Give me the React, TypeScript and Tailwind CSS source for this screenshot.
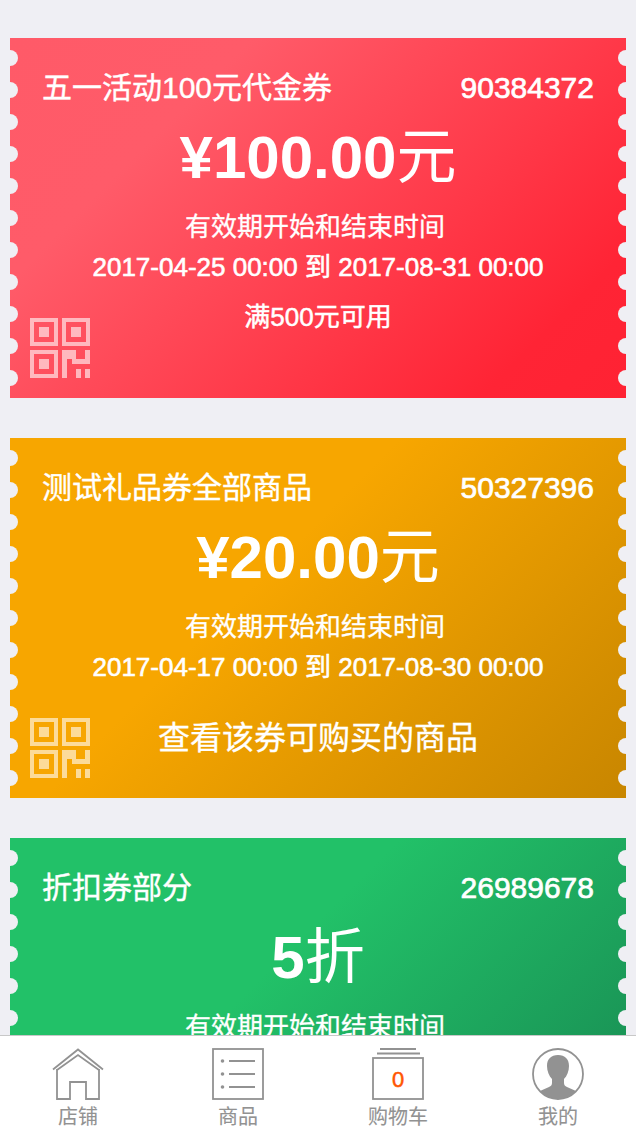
const font = { fontFamily: '"Liberation Sans", "Noto Sans CJK SC", sans-serif' };

function Qr() {
  return (
    <svg width="60" height="60" viewBox="0 0 60 60" className="absolute left-[20px] bottom-[20px]" fill="#fff" fillOpacity="0.6">
      <path fillRule="evenodd" d="M0 0h28v28H0zM4 4v20h20V4zM9 9h10v10H9z" />
      <path fillRule="evenodd" d="M32 0h28v28H32zM36 4v20h20V4zM41 9h10v10H41z" />
      <path fillRule="evenodd" d="M0 32h28v28H0zM4 36v20h20V36zM9 41h10v10H9z" />
      <path d="M32 32h14v9h9v-9h5v14H42v-5h-5v19h-5z" />
      <path d="M46 51h5v9h-5zM55 51h5v9h-5z" />
    </svg>
  );
}

function Scallops({ side }: { side: 'left' | 'right' }) {
  return (
    <div className={side === 'left' ? 'absolute top-[12px] left-[-8px] flex flex-col gap-[16px]' : 'absolute top-[12px] right-[-8px] flex flex-col gap-[16px]'}>
      {Array.from({ length: 11 }).map((_, i) => (
        <div key={i} className="w-[16px] h-[16px] rounded-full bg-[#efeff4]" />
      ))}
    </div>
  );
}

function Card({ gradient, title, code, amount, unit, start, footer, footerBig }: {
  gradient: string; title: string; code: string; amount: string; unit: string; start: string; footer: string; footerBig?: boolean;
}) {
  return (
    <div className={`relative mx-[10px] h-[360px] shrink-0 overflow-hidden text-white ${gradient}`}>
      <Scallops side="left" />
      <Scallops side="right" />
      <div className="flex justify-between items-center pt-[32px] px-[32px] h-[68px] text-[30px] leading-[36px]">
        <span className="[-webkit-text-stroke:0.4px_#fff]">{title}</span>
        <span className="[-webkit-text-stroke:0.7px_#fff]">{code}</span>
      </div>
      <div className="flex justify-center items-baseline h-[72px] mt-[16px] leading-[72px]">
        <span className="font-bold text-[60px]">{amount}</span>
        <span className="text-[60px]">{unit}</span>
      </div>
      <div className="text-center text-[26px] leading-[40px] mt-[13px] pr-[6px] [-webkit-text-stroke:0.3px_#fff]">有效期开始和结束时间</div>
      <div className="text-center text-[26px] leading-[40px] [-webkit-text-stroke:0.6px_#fff]">{start}</div>
      <div className={footerBig ? 'text-center text-[32px] leading-[40px] mt-[31px] [-webkit-text-stroke:0.3px_#fff]' : 'text-center text-[26px] leading-[40px] mt-[10px] [-webkit-text-stroke:0.5px_#fff]'}>{footer}</div>
      <Qr />
    </div>
  );
}

function Tab({ label, children }: { label: string; children: React.ReactNode }) {
  return (
    <div className="w-[160px] flex flex-col items-center">
      <div className="w-[52px] h-[52px] mt-[12px] relative">{children}</div>
      <div className="text-[20px] leading-[24px] mt-[5px] text-[#929292] [-webkit-text-stroke:0.1px_#929292]">{label}</div>
    </div>
  );
}

export default function App() {
  return (
    <div style={font} className="w-[636px] h-[1134px] bg-[#efeff4] flex flex-col overflow-hidden">
      <div className="flex-1 min-h-0 overflow-hidden pt-[38px] flex flex-col gap-[40px]">
        <Card gradient="bg-[linear-gradient(135deg,#ff5a68_0%,#ff5b69_25%,#ff2435_85%,#ff2233_100%)]" title="五一活动100元代金券" code="90384372" amount="¥100.00" unit="元" start="2017-04-25 00:00 到 2017-08-31 00:00" footer="满500元可用" />
        <Card gradient="bg-[linear-gradient(135deg,#f7a600_0%,#f7a600_40%,#c88600_100%)]" title="测试礼品券全部商品" code="50327396" amount="¥20.00" unit="元" start="2017-04-17 00:00 到 2017-08-30 00:00" footer="查看该券可购买的商品" footerBig />
        <Card gradient="bg-[linear-gradient(135deg,#22c168_0%,#22c168_40%,#178550_100%)]" title="折扣券部分" code="26989678" amount="5" unit="折" start="2017-04-17 00:00 到 2017-08-30 00:00" footer="" />
      </div>
      <div className="h-[99px] shrink-0 bg-white border-t border-[#c8c8c8] flex justify-center">
        <div className="w-[640px] shrink-0 flex">
        <Tab label="店铺">
          <svg width="52" height="52" viewBox="0 0 52 52" fill="none" stroke="#929292" strokeWidth="1.8">
            <path d="M1 21.500L26 1.500l25 20" />
            <path d="M5 22L26 7l21 15" />
            <path d="M5 21v30h13V34h16v17h13V21" />
          </svg>
        </Tab>
        <Tab label="商品">
          <svg width="52" height="52" viewBox="0 0 52 52" fill="none" stroke="#929292" strokeWidth="1.8">
            <rect x="1" y="1" width="50" height="50" />
            <path d="M17 13h26M17 26h26M17 39h26" />
            <circle cx="10.500" cy="13" r="1.800" fill="#929292" stroke="none" />
            <circle cx="10.500" cy="26" r="1.800" fill="#929292" stroke="none" />
            <circle cx="10.500" cy="39" r="1.800" fill="#929292" stroke="none" />
          </svg>
        </Tab>
        <Tab label="购物车">
          <svg width="52" height="52" viewBox="0 0 52 52" fill="none" stroke="#929292" strokeWidth="1.8">
            <path d="M8 1h36M5 5.500h43" />
            <rect x="1" y="10" width="50" height="41" />
          </svg>
          <span className="absolute left-0 right-0 top-[19px] text-center text-[22px] leading-[26px] text-[#ff5500] [-webkit-text-stroke:0.5px_#ff5500]">0</span>
        </Tab>
        <Tab label="我的">
          <svg width="52" height="52" viewBox="0 0 52 52">
            <circle cx="26" cy="26" r="25" fill="none" stroke="#929292" strokeWidth="1.8" />
            <path d="M26 7C19 7 15 11 15 18c0 5 2 10 5 13v4c0 2-1 3-3 4L8 43a24 24 0 0 0 36 0l-9-4c-2-1-3-2-3-4v-4c3-3 5-8 5-13C37 11 33 7 26 7z" fill="#929292" />
          </svg>
        </Tab>
        </div>
      </div>
    </div>
  );
}
